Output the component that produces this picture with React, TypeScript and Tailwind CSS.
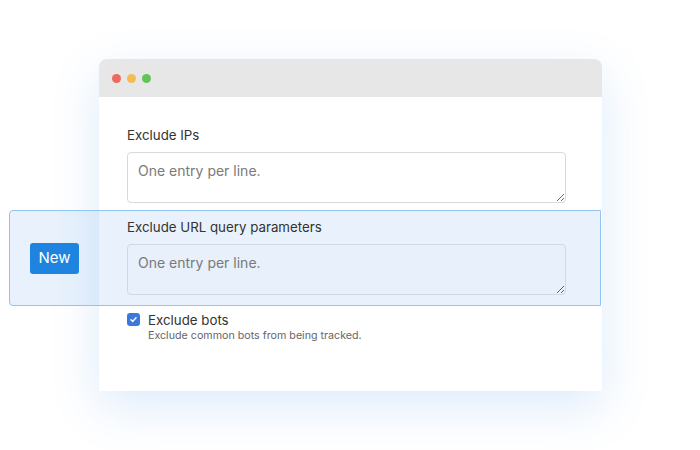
import React from 'react';

const font = { fontFamily: 'Inter, "Noto Sans", sans-serif' };

export default function App() {
  return (
    <div className="w-[700px] h-[450px] bg-white overflow-hidden pt-[59px] pl-[99px]" style={font}>
      <div className="w-[503px] h-[332px] bg-white rounded-t-lg shadow-[0_16px_50px_rgba(40,130,230,0.16)]">
        {/* title bar */}
        <div className="h-[38px] bg-[#e7e7e7] rounded-t-lg flex items-center gap-[6px] pl-[13px]">
          <span className="w-[9px] h-[9px] rounded-full bg-[#ee6a5f]" />
          <span className="w-[9px] h-[9px] rounded-full bg-[#f5bd4f]" />
          <span className="w-[9px] h-[9px] rounded-full bg-[#61c454]" />
        </div>

        <div className="pt-[28px]">
          <div className="pl-[28px] pr-[36px]">
            <label className="block text-[13.3px] leading-[20px] text-[#333]">Exclude IPs</label>
            <textarea
              className="mt-[7px] block w-[439px] h-[51px] border border-[#d9d9d9] rounded-[4px] px-[10px] py-[8px] text-[14px] leading-[20px] text-[#333] placeholder:text-[#7a7a7a] bg-white outline-none"
              placeholder="One entry per line."
            />
          </div>

          {/* highlighted row */}
          <div className="relative -ml-[90px] mt-[7px] w-[592px] h-[96px] flex items-start border border-[#93c3f1] rounded-l-[4px] bg-[rgba(35,130,225,0.1)]">
            <div className="self-center w-[117px] pl-[20px] flex items-center">
              <span className="w-[49px] h-[31px] rounded-[3px] bg-[#1e84e0] text-white text-[15px] flex items-center justify-center">
                New
              </span>
            </div>
            <div className="flex flex-col pt-[6px]">
              <label className="block text-[13.3px] leading-[20px] text-[#333]">Exclude URL query parameters</label>
              <textarea
                className="mt-[7px] block w-[439px] h-[51px] border border-[#cfd8e3] rounded-[4px] px-[10px] py-[8px] text-[14px] leading-[20px] text-[#333] placeholder:text-[#7a7a7a] bg-[rgba(200,215,235,0.06)] outline-none"
                placeholder="One entry per line."
              />
            </div>
          </div>

          <div className="pl-[28px] pt-[4px] flex items-start gap-[8px]">
            <span className="mt-[3px] w-[13px] h-[13px] rounded-[3px] bg-[#3b78dc] flex items-center justify-center">
              <svg width="9" height="9" viewBox="0 0 10 10" fill="none">
                <path d="M2.2 5.2 L4.2 7.1 L7.8 3" stroke="white" strokeWidth="1.6" strokeLinecap="round" strokeLinejoin="round" />
              </svg>
            </span>
            <div>
              <div className="text-[13.3px] leading-[20px] text-[#333]">Exclude bots</div>
              <div className="text-[10.7px] leading-[14px] text-[#666] -mt-[1px]">Exclude common bots from being tracked.</div>
            </div>
          </div>
        </div>
      </div>
    </div>
  );
}
